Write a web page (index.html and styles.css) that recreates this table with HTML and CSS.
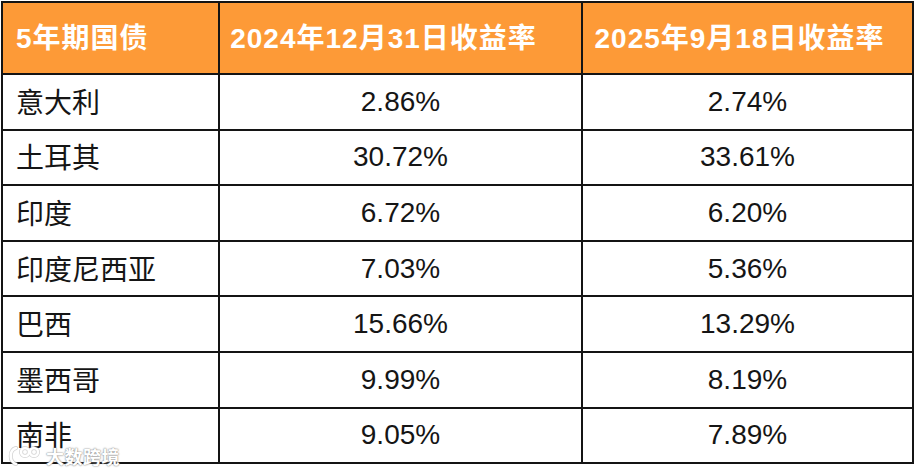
FILE: index.html
```html
<!DOCTYPE html>
<html lang="zh-CN">
<head>
<meta charset="utf-8">
<link rel="stylesheet" href="styles.css">
</head>
<body>
<div class="wrap">
<table class="bonds">
  <colgroup>
    <col class="c1"><col class="c2"><col class="c3">
  </colgroup>
  <thead>
    <tr><th class="name">5年期国债</th><th class="h2">2024年12月31日收益率</th><th>2025年9月18日收益率</th></tr>
  </thead>
  <tbody>
    <tr><td class="name">意大利</td><td>2.86%</td><td>2.74%</td></tr>
    <tr><td class="name">土耳其</td><td>30.72%</td><td>33.61%</td></tr>
    <tr><td class="name">印度</td><td>6.72%</td><td>6.20%</td></tr>
    <tr><td class="name">印度尼西亚</td><td>7.03%</td><td>5.36%</td></tr>
    <tr><td class="name">巴西</td><td>15.66%</td><td>13.29%</td></tr>
    <tr><td class="name">墨西哥</td><td>9.99%</td><td>8.19%</td></tr>
    <tr><td class="name">南非</td><td>9.05%</td><td>7.89%</td></tr>
  </tbody>
</table>
<div class="watermark">
  <svg class="wm-logo" width="36" height="22" viewBox="0 0 36 22">
    <g fill="none" stroke="#a8a8a8" stroke-width="4" stroke-linecap="round" opacity="0.5">
      <path d="M10 3 C3 5 3 17 10 19"/>
      <circle cx="19" cy="7" r="4"/>
      <circle cx="28" cy="7" r="4"/>
    </g>
    <g fill="none" stroke="#ffffff" stroke-width="2.5" stroke-linecap="round">
      <path d="M10 3 C3 5 3 17 10 19"/>
      <circle cx="19" cy="7" r="4"/>
      <circle cx="28" cy="7" r="4"/>
    </g>
  </svg>
  <span class="wm-text">大数跨境</span>
</div>
</div>
</body>
</html>
```
FILE: styles.css
```css
html, body {
  margin: 0;
  padding: 0;
  background: #ffffff;
}
.wrap {
  position: relative;
  width: 915px;
  height: 472px;
}
.bonds {
  border-collapse: collapse;
  margin: 1px 0 0 1px;
  width: 911px;
  table-layout: fixed;
  font-family: "Liberation Sans", "Noto Sans CJK SC", sans-serif;
}
.c1 { width: 217px; }
.c2 { width: 363px; }
.c3 { width: 331px; }
.bonds th, .bonds td {
  border: 2px solid #141414;
  padding: 0;
  text-align: center;
  vertical-align: middle;
}
.bonds thead tr { height: 72px; }
.bonds tbody tr { height: 55.6px; }
.bonds th {
  background: #fd9a37;
  color: #ffffff;
  font-weight: bold;
  font-size: 28px;
  letter-spacing: 1px;
  padding-bottom: 5px;
  padding-right: 16px;
}
.bonds th.h2 { padding-right: 34px; }
.bonds td {
  color: #151515;
  font-size: 28px;
  background: #ffffff;
}
.bonds .name {
  text-align: left;
  padding-left: 13px;
  padding-right: 0;
}
.bonds td.name { padding-bottom: 2px; }
.watermark {
  position: absolute;
  left: 6px;
  top: 444px;
  display: flex;
  align-items: center;
  gap: 4px;
}
.wm-text {
  font-family: "Noto Sans CJK SC", sans-serif;
  font-weight: bold;
  font-size: 18px;
  line-height: 22px;
  color: #ffffff;
  text-shadow: 0 0 2px #8a8a8a, 0 0 1px #8a8a8a;
  letter-spacing: 0.5px;
}
```
